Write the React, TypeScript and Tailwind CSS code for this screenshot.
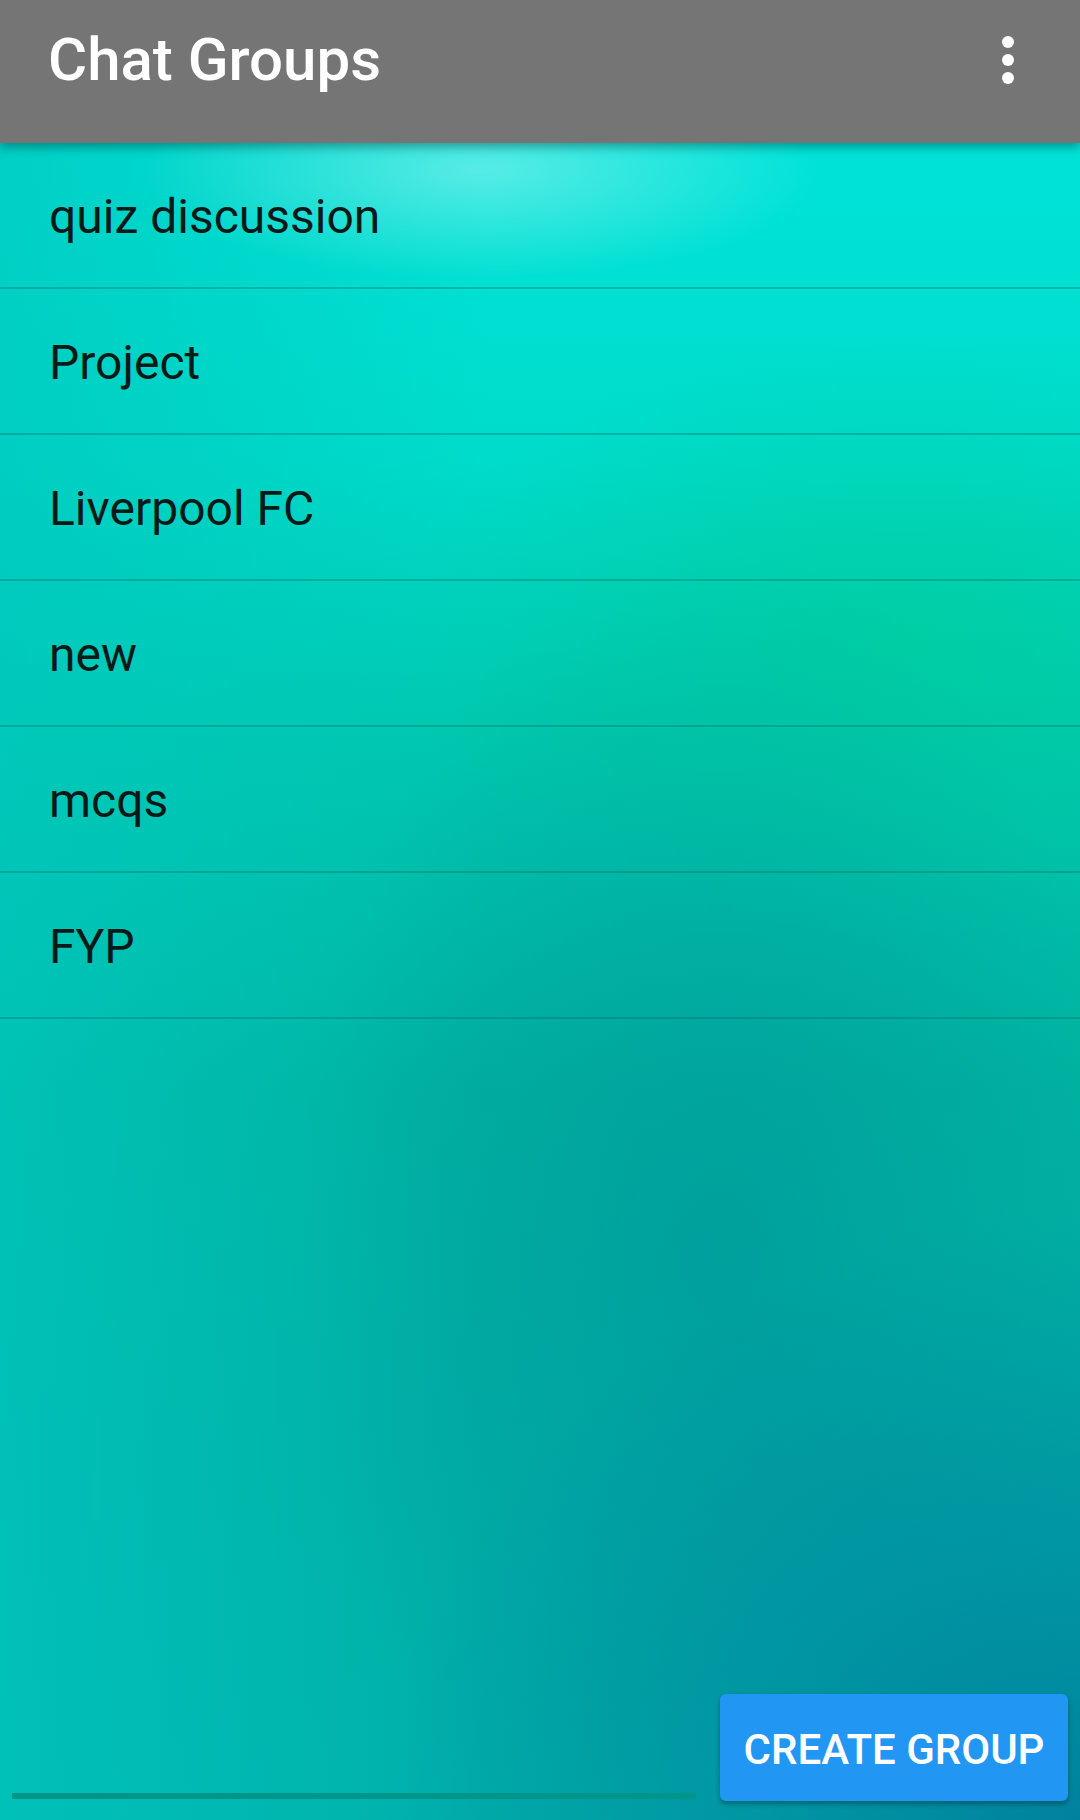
const groups = ['quiz discussion', 'Project', 'Liverpool FC', 'new', 'mcqs', 'FYP'];

export default function App() {
  return (
    <div className="flex h-[1820px] w-[1080px] flex-col overflow-hidden font-['Roboto',sans-serif] bg-[radial-gradient(ellipse_340px_110px_at_480px_170px,rgba(255,255,255,0.34),transparent),radial-gradient(ellipse_700px_600px_at_1080px_1820px,#00829e,transparent),radial-gradient(ellipse_420px_700px_at_720px_1250px,rgba(0,140,150,0.45),transparent),radial-gradient(ellipse_500px_300px_at_900px_640px,rgba(0,205,150,0.6),transparent),linear-gradient(90deg,rgba(0,200,190,0.7),transparent_45%),linear-gradient(180deg,#00e3d9_8%,#00dccb_25%,#00c8b0_40%,#00b2a0_60%,#00aea6_80%,#00b0aa_100%)]">
      {/* Toolbar */}
      <header className="relative z-10 flex h-[143px] shrink-0 items-center justify-between bg-[#757575] pb-[24px] pl-[48px] pr-[66px] shadow-[0_4px_10px_rgba(0,0,0,0.35)]">
        <h1 className="text-[60px] font-medium leading-none text-white">Chat Groups</h1>
        <div className="flex flex-col items-center gap-[6px]">
          <span className="h-[12px] w-[12px] rounded-full bg-white" />
          <span className="h-[12px] w-[12px] rounded-full bg-white" />
          <span className="h-[12px] w-[12px] rounded-full bg-white" />
        </div>
      </header>

      {/* Group list */}
      <ul className="flex flex-col">
        {groups.map((g) => (
          <li
            key={g}
            className="flex h-[146px] items-center border-b-2 border-[rgba(0,110,100,0.35)] pl-[49px] pt-[4px] text-[48px] leading-none text-[#081a18]"
          >
            {g}
          </li>
        ))}
      </ul>

      <div className="flex-1" />

      {/* Bottom input + button */}
      <div className="flex items-end gap-[24px] pb-[19px] pl-[12px] pr-[12px]">
        <div className="mb-[2px] h-[6px] flex-1 bg-[#00958a]" />
        <button className="flex h-[107px] w-[348px] items-center justify-center rounded-[6px] bg-[#2196f3] pt-[4px] text-[42px] font-medium text-white shadow-[0_3px_5px_rgba(0,0,0,0.3)]">
          CREATE GROUP
        </button>
      </div>
    </div>
  );
}
